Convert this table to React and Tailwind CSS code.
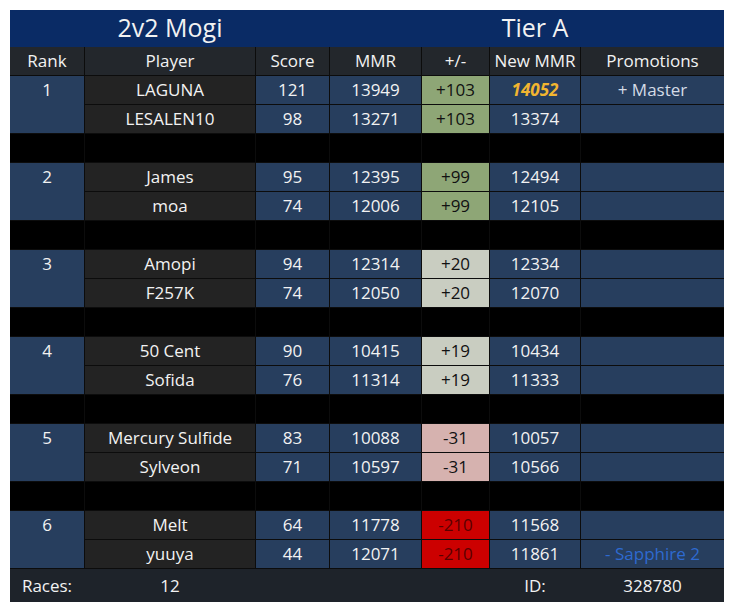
import React from "react";

const groups = [
  { rank: 1, players: [
    { name: "LAGUNA", score: 121, mmr: 13949, delta: "+103", nmmr: "14052", promo: "+ Master", hi: true },
    { name: "LESALEN10", score: 98, mmr: 13271, delta: "+103", nmmr: "13374", promo: "" },
  ], d: "bg-[#8ea676] text-[#111]" },
  { rank: 2, players: [
    { name: "James", score: 95, mmr: 12395, delta: "+99", nmmr: "12494", promo: "" },
    { name: "moa", score: 74, mmr: 12006, delta: "+99", nmmr: "12105", promo: "" },
  ], d: "bg-[#8ea676] text-[#111]" },
  { rank: 3, players: [
    { name: "Amopi", score: 94, mmr: 12314, delta: "+20", nmmr: "12334", promo: "" },
    { name: "F257K", score: 74, mmr: 12050, delta: "+20", nmmr: "12070", promo: "" },
  ], d: "bg-[#c9cdc1] text-[#111]" },
  { rank: 4, players: [
    { name: "50 Cent", score: 90, mmr: 10415, delta: "+19", nmmr: "10434", promo: "" },
    { name: "Sofida", score: 76, mmr: 11314, delta: "+19", nmmr: "11333", promo: "" },
  ], d: "bg-[#c9cdc1] text-[#111]" },
  { rank: 5, players: [
    { name: "Mercury Sulfide", score: 83, mmr: 10088, delta: "-31", nmmr: "10057", promo: "" },
    { name: "Sylveon", score: 71, mmr: 10597, delta: "-31", nmmr: "10566", promo: "" },
  ], d: "bg-[#d6b2af] text-[#111]" },
  { rank: 6, players: [
    { name: "Melt", score: 64, mmr: 11778, delta: "-210", nmmr: "11568", promo: "" },
    { name: "yuuya", score: 44, mmr: 12071, delta: "-210", nmmr: "11861", promo: "- Sapphire 2", down: true },
  ], d: "bg-[#cc0000] text-[#5a0000]" },
];

const cell = "flex items-center justify-center h-[28px] whitespace-nowrap";
const blue = "bg-[#273e5e]";

export default function App() {
  const rows = [];
  groups.forEach((g, gi) => {
    g.players.forEach((p, pi) => {
      const k = `${gi}-${pi}`;
      if (pi === 0) {
        rows.push(
          <div key={k + "r"} className={`${blue} row-span-2 flex justify-center items-start`}>
            <div className={cell}>{g.rank}</div>
          </div>
        );
      }
      rows.push(<div key={k + "p"} className={`${cell} bg-[#232323]`}>{p.name}</div>);
      rows.push(<div key={k + "s"} className={`${cell} ${blue}`}>{p.score}</div>);
      rows.push(<div key={k + "m"} className={`${cell} ${blue}`}>{p.mmr}</div>);
      rows.push(<div key={k + "d"} className={`${cell} ${g.d}`}>{p.delta}</div>);
      rows.push(
        <div key={k + "n"} className={`${cell} ${blue} ${p.hi ? "font-bold italic text-[#f2b530]" : ""}`}>{p.nmmr}</div>
      );
      rows.push(
        <div key={k + "o"} className={`${cell} ${blue} ${p.down ? "text-[#2e6ad0]" : "text-[#d4dbe6]"}`}>{p.promo}</div>
      );
    });
    if (gi < groups.length - 1) {
      for (let i = 0; i < 7; i++) rows.push(<div key={`sp${gi}-${i}`} className="h-[28px] bg-black" />);
    }
  });

  return (
    <div className="w-[733px] h-[611px] bg-white pt-[10px] pl-[10px]" style={{ fontFamily: '"Open Sans", "Liberation Sans", sans-serif' }}>
      <div className="w-[714px] text-[17px] text-[#f2f2f2]">
        <div className="flex h-[37px] bg-[#0a2b65] text-[25px] leading-none">
          <div className="w-[320px] flex items-center justify-center pb-[3px]">2v2 Mogi</div>
          <div className="flex-1 flex items-center justify-center pl-[16px] pb-[3px]">Tier A</div>
        </div>
        <div className="grid grid-cols-[74px_170px_73px_91px_67px_90px_143px] gap-px bg-[#0c0c0c] pb-px">
          {["Rank", "Player", "Score", "MMR", "+/-", "New MMR", "Promotions"].map((h) => (
            <div key={h} className={`${cell} bg-[#23272c]`}>{h}</div>
          ))}
          {rows}
        </div>
        <div className="grid grid-cols-[74px_170px_73px_91px_67px_90px_143px] gap-px h-[33px] bg-[#1e232a]">
          <div className="flex items-center justify-center">Races:</div>
          <div className="flex items-center justify-center">12</div>
          <div />
          <div />
          <div />
          <div className="flex items-center justify-center">ID:</div>
          <div className="flex items-center justify-center">328780</div>
        </div>
      </div>
    </div>
  );
}
